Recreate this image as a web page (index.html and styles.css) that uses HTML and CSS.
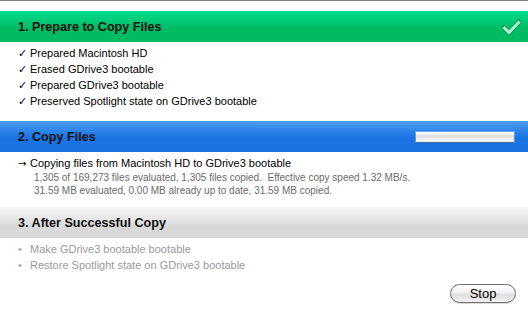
FILE: index.html
```html
<!DOCTYPE html>
<html>
<head>
<meta charset="utf-8">
<link rel="stylesheet" href="styles.css">
</head>
<body>
<div class="window">
  <section class="step">
    <header class="bar bar-green">
      <h2>1. Prepare to Copy Files</h2>
      <svg class="done" width="19" height="17" viewBox="0 0 19 17">
        <path d="M2 9 L7 14 L17 3" fill="none" stroke="#0a9a58" stroke-width="5" stroke-linecap="square"/>
        <path d="M2.5 9 L7 13.5 L16.5 3.5" fill="none" stroke="#a8f2cc" stroke-width="3" stroke-linecap="square"/>
      </svg>
    </header>
    <ul class="items">
      <li><span class="mark">✓</span>Prepared Macintosh HD</li>
      <li><span class="mark">✓</span>Erased GDrive3 bootable</li>
      <li><span class="mark">✓</span>Prepared GDrive3 bootable</li>
      <li><span class="mark">✓</span>Preserved Spotlight state on GDrive3 bootable</li>
    </ul>
  </section>
  <section class="step">
    <header class="bar bar-blue">
      <h2>2. Copy Files</h2>
      <div class="progress"></div>
    </header>
    <ul class="items">
      <li><span class="mark arrow">→</span>Copying files from Macintosh HD to GDrive3 bootable</li>
    </ul>
    <div class="details">
      <p>1,305 of 169,273 files evaluated, 1,305 files copied.&nbsp; Effective copy speed 1.32 MB/s.</p>
      <p>31.59 MB evaluated, 0.00 MB already up to date, 31.59 MB copied.</p>
    </div>
  </section>
  <section class="step">
    <header class="bar bar-gray">
      <h2>3. After Successful Copy</h2>
    </header>
    <ul class="items pending">
      <li><span class="mark dot">•</span>Make GDrive3 bootable bootable</li>
      <li><span class="mark dot">•</span>Restore Spotlight state on GDrive3 bootable</li>
    </ul>
  </section>
  <div class="actions">
    <button class="btn">Stop</button>
  </div>
</div>
</body>
</html>
```
FILE: styles.css
```css
html, body {
  margin: 0;
  padding: 0;
  background: #fff;
}
body {
  font-family: "Liberation Sans", Arial, sans-serif;
  width: 528px;
  height: 310px;
  overflow: hidden;
}
.window {
  border-top: 1px solid #7f7f7f;
  padding-top: 10px;
}
.step { margin: 0; }
.bar {
  height: 31px;
  display: flex;
  align-items: center;
  justify-content: space-between;
  padding: 0 7px 0 18px;
  box-sizing: border-box;
}
.bar h2 {
  margin: 0;
  font-size: 12.6px;
  font-weight: bold;
  color: #111;
}
.bar-green {
  background: linear-gradient(#02de90 0%, #01cc78 30%, #00bb62 55%, #00bb62 100%);
}
.bar-blue {
  background: linear-gradient(#4f9cf2 0%, #2f86ea 30%, #1a73e2 55%, #1a73e2 100%);
  margin-top: 12px;
  padding-right: 14px;
}
.bar-gray {
  background: linear-gradient(#f6f6f6 0%, #e6e6e6 40%, #d9d9d9 60%, #d9d9d9 100%);
  margin-top: 10px;
}
.done { display: block; margin-top: 1px; }
.progress {
  width: 98px;
  height: 10px;
  background: linear-gradient(#ffffff 0%, #f4f4f4 20%, #dcdcdc 40%, #eaeaea 60%, #f8f8f8 80%, #e0e0e0 100%);
  box-shadow: 0 1px 1px rgba(0,0,0,0.25), 0 0 0 1px rgba(255,255,255,0.3);
}
.items {
  list-style: none;
  margin: 0;
  padding: 3px 0 0 18px;
  font-size: 11px;
  color: #000;
}
.items li {
  height: 16px;
  line-height: 16px;
  white-space: nowrap;
}
.mark {
  display: inline-block;
  width: 12px;
}
.arrow {
  font-family: "DejaVu Sans", sans-serif;
  font-size: 10px;
}
.pending { color: #9a9a9a; }
.dot { color: #a8a8a8; }
.details {
  padding-left: 34px;
  font-size: 10px;
  color: #6a6a6a;
}
.details p {
  margin: 0;
  height: 13px;
  line-height: 13px;
  white-space: nowrap;
}
.actions {
  display: flex;
  justify-content: flex-end;
  padding: 11px 12px 0 0;
}
.btn {
  width: 66px;
  height: 19px;
  border: 1px solid #6e6e6e;
  border-radius: 10px;
  background: linear-gradient(#ffffff 0%, #f2f2f2 45%, #dedede 55%, #f4f4f4 100%);
  font-family: "Liberation Sans", Arial, sans-serif;
  font-size: 13px;
  color: #000;
  padding: 0;
  box-shadow: 0 1px 1px rgba(0,0,0,0.15);
}
```
